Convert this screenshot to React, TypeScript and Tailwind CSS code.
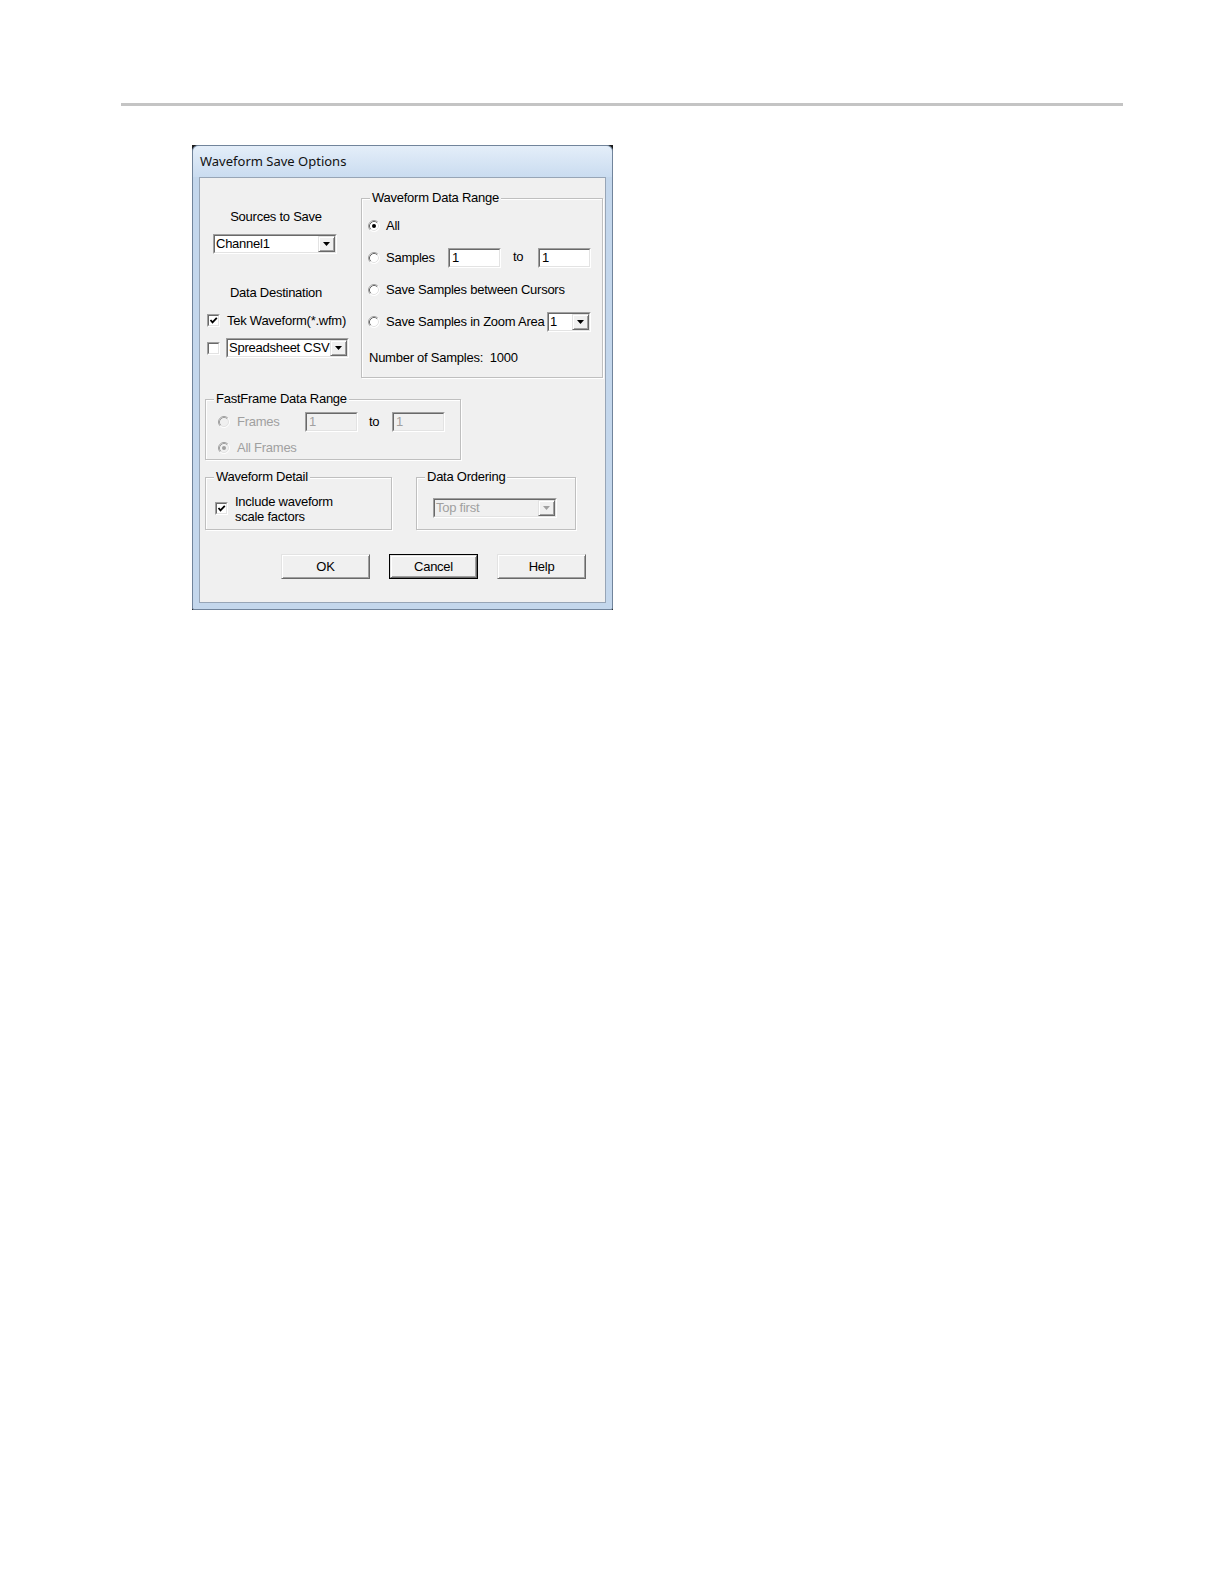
import React from "react";

const raised =
  "border border-t-[#e3e3e3] border-l-[#e3e3e3] border-b-[#696969] border-r-[#696969] shadow-[inset_1px_1px_0_#ffffff,inset_-1px_-1px_0_#a0a0a0]";
const sunkenOuter =
  "border border-t-[#a0a0a0] border-l-[#a0a0a0] border-b-[#ffffff] border-r-[#ffffff]";
const sunkenInner =
  "border border-t-[#696969] border-l-[#696969] border-b-[#e3e3e3] border-r-[#e3e3e3]";

function Arrow({ disabled }: { disabled?: boolean }) {
  return (
    <svg width="7" height="4" viewBox="0 0 7 4">
      <path d="M0 0 H7 L3.5 4 Z" fill={disabled ? "#a0a0a0" : "#000"} />
    </svg>
  );
}

function Combo({
  value,
  width,
  disabled,
}: {
  value: string;
  width: string;
  disabled?: boolean;
}) {
  return (
    <div className={`${width} h-[20px] ${sunkenOuter} ${disabled ? "bg-[#f0f0f0]" : "bg-white"}`}>
      <div className={`h-full w-full flex ${sunkenInner}`}>
        <span
          className={`flex-1 pl-[1px] leading-[16px] whitespace-nowrap overflow-hidden ${
            disabled ? "text-[#a0a0a0]" : "text-black"
          }`}
        >
          {value}
        </span>
        <span className={`w-[17px] h-full bg-[#f0f0f0] flex items-center justify-center ${raised}`}>
          <Arrow disabled={disabled} />
        </span>
      </div>
    </div>
  );
}

function TextBox({
  value,
  width,
  disabled,
}: {
  value: string;
  width: string;
  disabled?: boolean;
}) {
  return (
    <div className={`${width} h-[20px] ${sunkenOuter} ${disabled ? "bg-[#f0f0f0]" : "bg-white"}`}>
      <div
        className={`h-full w-full pl-[2px] leading-[16px] ${sunkenInner} ${
          disabled ? "text-[#a0a0a0]" : "text-black"
        }`}
      >
        {value}
      </div>
    </div>
  );
}

function Radio({ checked, disabled }: { checked?: boolean; disabled?: boolean }) {
  return (
    <svg width="12" height="12" viewBox="0 0 12 12" className="shrink-0">
      <circle cx="6" cy="6" r="5.5" fill={disabled ? "#f0f0f0" : "#ffffff"} />
      <path d="M2.11 9.89 A5.5 5.5 0 0 1 9.89 2.11" stroke="#a0a0a0" fill="none" />
      <path d="M9.89 2.11 A5.5 5.5 0 0 1 2.11 9.89" stroke="#ffffff" fill="none" />
      <path
        d="M2.82 9.18 A4.5 4.5 0 0 1 9.18 2.82"
        stroke={disabled ? "#a0a0a0" : "#696969"}
        fill="none"
      />
      <path d="M9.18 2.82 A4.5 4.5 0 0 1 2.82 9.18" stroke="#e3e3e3" fill="none" />
      {checked && <circle cx="6" cy="6" r="2" fill={disabled ? "#a0a0a0" : "#000"} />}
    </svg>
  );
}

function Check({ checked }: { checked?: boolean }) {
  return (
    <div className={`w-[13px] h-[13px] shrink-0 bg-white ${sunkenOuter}`}>
      <div className={`w-full h-full ${sunkenInner} flex items-center justify-center`}>
        {checked && (
          <svg width="9" height="9" viewBox="0 0 9 9">
            <path d="M1.5 4 L3.5 6.3 L7.8 1.8" stroke="#000" strokeWidth="1.8" fill="none" />
          </svg>
        )}
      </div>
    </div>
  );
}

function Group({
  title,
  className,
  children,
}: {
  title: string;
  className: string;
  children?: React.ReactNode;
}) {
  return (
    <div
      className={`relative border border-[#bfbfbf] shadow-[inset_1px_1px_0_#ffffff,1px_1px_0_#ffffff] ${className}`}
    >
      <span className="absolute -top-[9px] left-[8px] px-[2px] bg-[#f0f0f0] leading-[16px] text-black whitespace-nowrap">
        {title}
      </span>
      {children}
    </div>
  );
}

function Button({ label, isDefault }: { label: string; isDefault?: boolean }) {
  const inner = (
    <div
      className={`w-full h-full bg-[#f0f0f0] flex items-center justify-center text-black ${raised}`}
    >
      {label}
    </div>
  );
  return isDefault ? (
    <div className="w-[89px] h-[25px] border border-black">{inner}</div>
  ) : (
    <div className="w-[89px] h-[25px]">{inner}</div>
  );
}

export default function App() {
  return (
    <div className="w-full bg-white pt-[103px] pb-[200px] font-['Liberation_Sans',Arial,sans-serif] text-[13px] tracking-[-0.25px]">
      <div className="ml-[121px] w-[1002px] h-[3px] bg-[#c4c4c4]" />

      <div className="ml-[192px] mt-[39px] w-[421px] h-[465px] bg-[#1c1c1c]">
        <div className="h-full flex flex-col rounded-t-[6px] rounded-b-[2px] border border-[#71849b] bg-[#c4d7ec]">
          <div className="h-[31px] shrink-0 rounded-t-[6px] bg-gradient-to-b from-[#e4eef9] to-[#cadcf0] pl-[7px] flex items-center">
            <span className="font-['Noto_Sans',sans-serif] text-[13px] tracking-normal text-[#111]">
              Waveform Save Options
            </span>
          </div>

          <div className="mx-[6px] mb-[6px] flex-1 bg-[#f0f0f0] border border-[#97a5b6] pl-[5px] pt-[20px]">
            {/* Top row */}
            <div className="flex">
              <div className="w-[156px] flex flex-col">
                <div className="mt-[11px] w-[142px] h-[15px] leading-[15px] text-center text-black">
                  Sources to Save
                </div>
                <div className="mt-[10px] ml-[8px]">
                  <Combo value="Channel1" width="w-[124px]" />
                </div>
                <div className="mt-[31px] w-[142px] h-[15px] leading-[15px] text-center text-black">
                  Data Destination
                </div>
                <div className="mt-[13px] h-[15px] flex items-center">
                  <div className="ml-[2px]">
                    <Check checked />
                  </div>
                  <span className="ml-[7px] leading-[15px] text-black whitespace-nowrap">
                    Tek Waveform(*.wfm)
                  </span>
                </div>
                <div className="mt-[10px] h-[20px] flex items-center">
                  <div className="ml-[2px]">
                    <Check />
                  </div>
                  <div className="ml-[6px]">
                    <Combo value="Spreadsheet CSV" width="w-[123px]" />
                  </div>
                </div>
              </div>

              <Group title="Waveform Data Range" className="w-[242px] h-[180px]">
                <div className="pt-[11px] flex flex-col">
                  <div className="h-[32px] flex items-center">
                    <div className="ml-[6px]">
                      <Radio checked />
                    </div>
                    <span className="ml-[6px] text-black">All</span>
                  </div>
                  <div className="h-[32px] flex items-center">
                    <div className="ml-[6px]">
                      <Radio />
                    </div>
                    <span className="ml-[6px] w-[62px] text-black">Samples</span>
                    <TextBox value="1" width="w-[53px]" />
                    <span className="ml-[12px] w-[25px] text-black -mt-[2px]">to</span>
                    <TextBox value="1" width="w-[53px]" />
                  </div>
                  <div className="h-[32px] flex items-center">
                    <div className="ml-[6px]">
                      <Radio />
                    </div>
                    <span className="ml-[6px] text-black whitespace-nowrap">
                      Save Samples between Cursors
                    </span>
                  </div>
                  <div className="h-[32px] flex items-center">
                    <div className="ml-[6px]">
                      <Radio />
                    </div>
                    <span className="ml-[6px] w-[161px] text-black whitespace-nowrap">
                      Save Samples in Zoom Area
                    </span>
                    <Combo value="1" width="w-[44px]" />
                  </div>
                  <div className="mt-[4px] h-[32px] flex items-center pl-[7px] text-black whitespace-nowrap">
                    Number of Samples:&nbsp; 1000
                  </div>
                </div>
              </Group>
            </div>

            {/* FastFrame */}
            <Group title="FastFrame Data Range" className="mt-[21px] w-[256px] h-[61px]">
              <div className="pt-[9px] flex flex-col">
                <div className="h-[26px] flex items-center">
                  <div className="ml-[12px]">
                    <Radio disabled />
                  </div>
                  <span className="ml-[7px] w-[68px] text-[#a0a0a0]">Frames</span>
                  <TextBox value="1" width="w-[53px]" disabled />
                  <span className="ml-[11px] w-[23px] text-black">to</span>
                  <TextBox value="1" width="w-[53px]" disabled />
                </div>
                <div className="h-[26px] flex items-center">
                  <div className="ml-[12px]">
                    <Radio checked disabled />
                  </div>
                  <span className="ml-[7px] text-[#a0a0a0]">All Frames</span>
                </div>
              </div>
            </Group>

            {/* Detail + ordering */}
            <div className="mt-[17px] flex">
              <Group title="Waveform Detail" className="w-[187px] h-[53px]">
                <div className="pt-[16px] pl-[9px] flex">
                  <div className="mt-[8px]">
                    <Check checked />
                  </div>
                  <div className="ml-[7px] leading-[15px] text-black">
                    Include waveform
                    <br />
                    scale factors
                  </div>
                </div>
              </Group>
              <Group title="Data Ordering" className="ml-[24px] w-[160px] h-[53px]">
                <div className="pt-[20px] pl-[16px]">
                  <Combo value="Top first" width="w-[124px]" disabled />
                </div>
              </Group>
            </div>

            {/* Buttons */}
            <div className="mt-[24px] ml-[76px] flex gap-[19px]">
              <Button label="OK" />
              <Button label="Cancel" isDefault />
              <Button label="Help" />
            </div>
          </div>
        </div>
      </div>
    </div>
  );
}
